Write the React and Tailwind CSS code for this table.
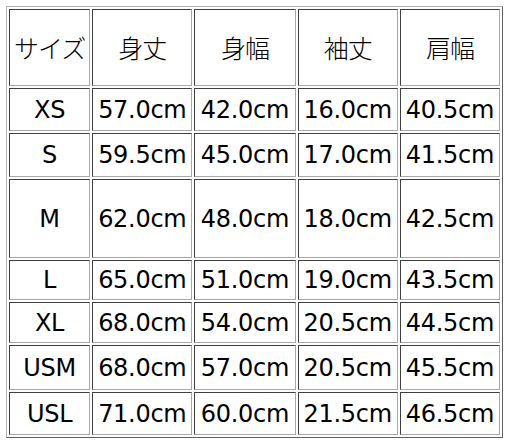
import React from "react";

const rows = [
  ["XS", "57.0cm", "42.0cm", "16.0cm", "40.5cm", "h-[43px]"],
  ["S", "59.5cm", "45.0cm", "17.0cm", "41.5cm", "h-[44px]"],
  ["M", "62.0cm", "48.0cm", "18.0cm", "42.5cm", "h-[79px]"],
  ["L", "65.0cm", "51.0cm", "19.0cm", "43.5cm", "h-[40px]"],
  ["XL", "68.0cm", "54.0cm", "20.5cm", "44.5cm", "h-[41px]"],
  ["USM", "68.0cm", "57.0cm", "20.5cm", "45.5cm", "h-[45px]"],
  ["USL", "71.0cm", "60.0cm", "21.5cm", "46.5cm", "h-[43px]"],
];

const cell =
  "p-0 text-center align-middle border border-t-[#404040] border-l-[#404040] border-b-[#a8a8a8] border-r-[#a8a8a8] whitespace-nowrap overflow-visible";

export default function App() {
  return (
    <div className="w-[507px] h-[443px] bg-white pt-[6px] pl-[6px]">
      <table
        className="table-fixed border-separate border-spacing-[2px] w-[497px] border border-t-[#b0b0b0] border-l-[#b0b0b0] border-b-[#606060] border-r-[#606060] text-black"
        style={{ fontFamily: '"DejaVu Sans", Verdana, sans-serif' }}
      >
        <colgroup>
          <col className="w-[81px]" />
          <col className="w-[100px]" />
          <col className="w-[101px]" />
          <col className="w-[100px]" />
          <col className="w-[100px]" />
        </colgroup>
        <tbody>
          <tr className="h-[77px]">
            {["サイズ", "身丈", "身幅", "袖丈", "肩幅"].map((h) => (
              <td
                key={h}
                className={`${cell} text-[25px] tracking-[-1px]`}
                style={{ fontFamily: '"Noto Sans CJK JP", sans-serif', fontWeight: 300 }}
              >
                {h}
              </td>
            ))}
          </tr>
          {rows.map((r) => (
            <tr key={r[0]} className={r[5]}>
              {r.slice(0, 5).map((v, i) => (
                <td key={i} className={`${cell} text-[24px] leading-none tracking-[-0.3px]`}>
                  {v}
                </td>
              ))}
            </tr>
          ))}
        </tbody>
      </table>
    </div>
  );
}
